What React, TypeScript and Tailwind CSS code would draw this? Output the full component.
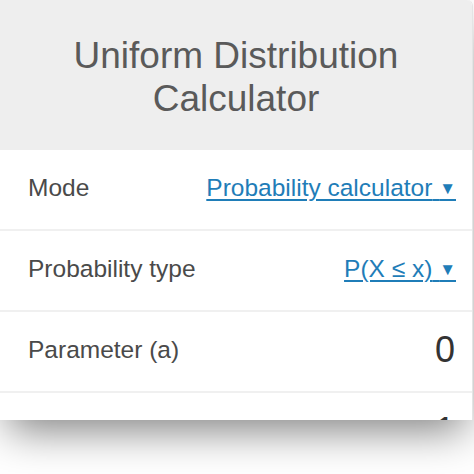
import React from 'react';

const font = { fontFamily: '"Liberation Sans", Arial, sans-serif' };

interface RowProps {
    label: string;
    children: React.ReactNode;
}

const Row: React.FC<RowProps> = ({ label, children }) => (
    <div className="h-[81px] flex items-center justify-between pl-[28px] pr-[16px] pb-[3px] border-b-2 border-[#f0f0f0] bg-white">
        <span className="text-[24.5px] text-[#4a4a4a]">{label}</span>
        {children}
    </div>
);

const Select: React.FC<{ value: string }> = ({ value }) => (
    <span className="text-[24.5px] text-[#1f7db8] underline decoration-[1.5px] underline-offset-[3px] whitespace-pre">
        {value} <span className="text-[17px] align-[2px]">▼</span>
    </span>
);

export default function App() {
    return (
        <div className="w-[474px] h-[474px] bg-white overflow-hidden" style={font}>
            <div className="w-[473px] h-[420px] overflow-hidden rounded-tr-[6px] border-r border-[#e4e4e4] bg-white shadow-[0_18px_40px_-8px_rgba(0,0,0,0.5)]">
                <div className="h-[150px] bg-[#eeeeee] flex items-center justify-center text-center pt-[3px]">
                    <h1 className="text-[37px] leading-[43px] text-[#5a5a5a] font-normal">
                        Uniform Distribution
                        <br />
                        Calculator
                    </h1>
                </div>

                <Row label="Mode">
                    <Select value="Probability calculator" />
                </Row>
                <Row label="Probability type">
                    <Select value="P(X ≤ x)" />
                </Row>
                <Row label="Parameter (a)">
                    <span className="text-[36px] text-[#333] pr-[1px]">0</span>
                </Row>
                <Row label="Parameter (b)">
                    <span className="text-[36px] text-[#333] pr-[1px]">1</span>
                </Row>
            </div>
        </div>
    );
}
